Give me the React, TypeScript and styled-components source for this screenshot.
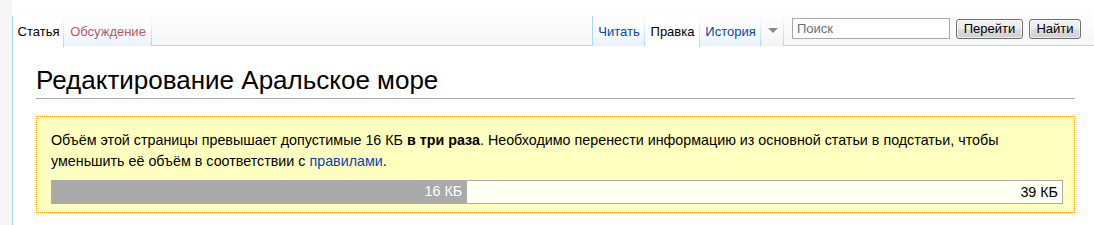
import styled, { createGlobalStyle } from 'styled-components'

const GlobalStyle = createGlobalStyle`
  html, body { margin: 0; padding: 0; }
  body {
    background: #f6f6f6;
    font-family: "Liberation Sans", Arial, sans-serif;
    color: #000;
  }
`

const Page = styled.div`
  display: flex;
  min-height: 225px;
`

const Sidebar = styled.div`
  width: 12px;
  flex: none;
  background: #f6f6f6;
`

const Main = styled.div`
  flex: 1;
  display: flex;
  flex-direction: column;
`

const Header = styled.div`
  display: flex;
  align-items: flex-end;
  height: 46px;
  padding-right: 13px;
  box-sizing: border-box;
  background:
    linear-gradient(#a7d7f9, #a7d7f9) left bottom / 100% 1px no-repeat,
    linear-gradient(#ffffff 0%, #fbfbfb 60%, #f6f6f6 100%);
`

const TabGroup = styled.div`
  display: flex;
  align-items: flex-end;
`

const Spacer = styled.div`
  flex: 1;
`

const Tab = styled.a<{ $selected?: boolean; $color?: string; $first?: boolean; $w: number }>`
  position: relative;
  display: flex;
  align-items: flex-end;
  justify-content: center;
  width: ${p => p.$w}px;
  height: ${p => (p.$selected ? '31px' : '30px')};
  margin-bottom: ${p => (p.$selected ? '-1px' : '0')};
  padding: 0 0 ${p => (p.$selected ? '8px' : '7px')};
  box-sizing: border-box;
  font-size: 13px;
  line-height: 15px;
  color: ${p => p.$color ?? '#0645ad'};
  text-decoration: none;
  cursor: pointer;
  background: ${p =>
    p.$selected
      ? '#ffffff'
      : 'linear-gradient(rgba(255,255,255,0) 0%, #fdfeff 40%, #e8f2fe 100%)'};
  border-left: ${p => (p.$first ? '1px solid #a7d7f9' : 'none')};
  &::after {
    content: '';
    position: absolute;
    right: 0;
    top: 0;
    bottom: 0;
    width: 1px;
    background: linear-gradient(rgba(167,215,249,0) 0%, #a7d7f9 100%);
  }
`

const MenuTab = styled.div`
  position: relative;
  display: flex;
  align-items: center;
  justify-content: center;
  width: 23px;
  height: 30px;
  box-sizing: border-box;
  padding-bottom: 2px;
  background: linear-gradient(rgba(255,255,255,0) 0%, #fbfbfb 50%, #f3f3f3 100%);
  &::after {
    content: '';
    position: absolute;
    right: 0;
    top: 0;
    bottom: 0;
    width: 1px;
    background: linear-gradient(rgba(167,215,249,0) 0%, #a7d7f9 100%);
  }
`

const Arrow = styled.span`
  width: 0;
  height: 0;
  border-left: 5px solid transparent;
  border-right: 5px solid transparent;
  border-top: 5px solid #888;
`

const Search = styled.form`
  display: flex;
  align-items: center;
  gap: 6px;
  margin-left: 8px;
  padding-bottom: 7px;
`

const SearchInput = styled.input`
  width: 158px;
  height: 21px;
  box-sizing: border-box;
  border: 1px solid #a9a9a9;
  padding: 0 4px;
  font-family: "Liberation Sans", Arial, sans-serif;
  font-size: 13px;
  background: #fff;
  &::placeholder { color: #6d6d6d; }
`

const Button = styled.button<{ $w: number }>`
  width: ${p => p.$w}px;
  height: 20px;
  box-sizing: border-box;
  border: 1px solid #707070;
  border-radius: 3px;
  padding: 0;
  font-family: "Liberation Sans", Arial, sans-serif;
  font-size: 13px;
  color: #000;
  background: linear-gradient(#f2f2f2 0%, #ebebeb 50%, #dddddd 51%, #cfcfcf 100%);
  box-shadow: inset 0 0 0 1px rgba(255,255,255,0.6);
`

const Content = styled.div`
  flex: 1;
  background: #fff;
  border-left: 1px solid #a7d7f9;
  padding: 20px 19px 12px 23px;
`

const Heading = styled.h1`
  margin: 0 0 17px;
  padding-bottom: 3px;
  font-weight: normal;
  font-size: 26px;
  line-height: 29px;
  border-bottom: 1px solid #aaa;
`

const Notice = styled.div`
  background: #ffffc0;
  border: 1px dotted #ffa500;
  padding: 13px 11px 8px 14px;
  font-size: 14.3px;
  line-height: 21px;
`

const Text = styled.p`
  margin: 0 0 8px;
`

const Link = styled.a`
  color: #0645ad;
  text-decoration: none;
`

const Bar = styled.div`
  display: flex;
  height: 24px;
  font-size: 14.3px;
  line-height: 22px;
`

const Used = styled.div`
  flex: none;
  background: #aaa;
  color: #fff;
  text-align: right;
  padding-right: 4px;
  box-sizing: border-box;
`

const Rest = styled.div`
  flex: 1;
  border: 1px solid #aaa;
  background: #fffff2;
  text-align: right;
  padding-right: 4px;
`

const used = 16
const total = 39

export default function App() {
  return (
    <>
      <GlobalStyle />
      <Page>
        <Sidebar />
        <Main>
          <Header>
            <TabGroup>
              <Tab $selected $first $w={52} $color="#000">Статья</Tab>
              <Tab $w={88} $color="#b05a66">Обсуждение</Tab>
            </TabGroup>
            <Spacer />
            <TabGroup>
              <Tab $first $w={53}>Читать</Tab>
              <Tab $selected $w={55} $color="#000">Правка</Tab>
              <Tab $w={61}>История</Tab>
              <MenuTab>
                <Arrow />
              </MenuTab>
            </TabGroup>
            <Search onSubmit={e => e.preventDefault()}>
              <SearchInput placeholder="Поиск" />
              <Button $w={67} type="button">Перейти</Button>
              <Button $w={52} type="button">Найти</Button>
            </Search>
          </Header>
          <Content>
            <Heading>Редактирование Аральское море</Heading>
            <Notice>
              <Text>
                Объём этой страницы превышает допустимые 16 КБ <b>в три раза</b>. Необходимо
                перенести информацию из основной статьи в подстатьи, чтобы уменьшить её объём
                в соответствии с <Link>правилами</Link>.
              </Text>
              <Bar>
                <Used style={{ width: `${(used / total) * 100}%` }}>16 КБ</Used>
                <Rest>39 КБ</Rest>
              </Bar>
            </Notice>
          </Content>
        </Main>
      </Page>
    </>
  )
}
